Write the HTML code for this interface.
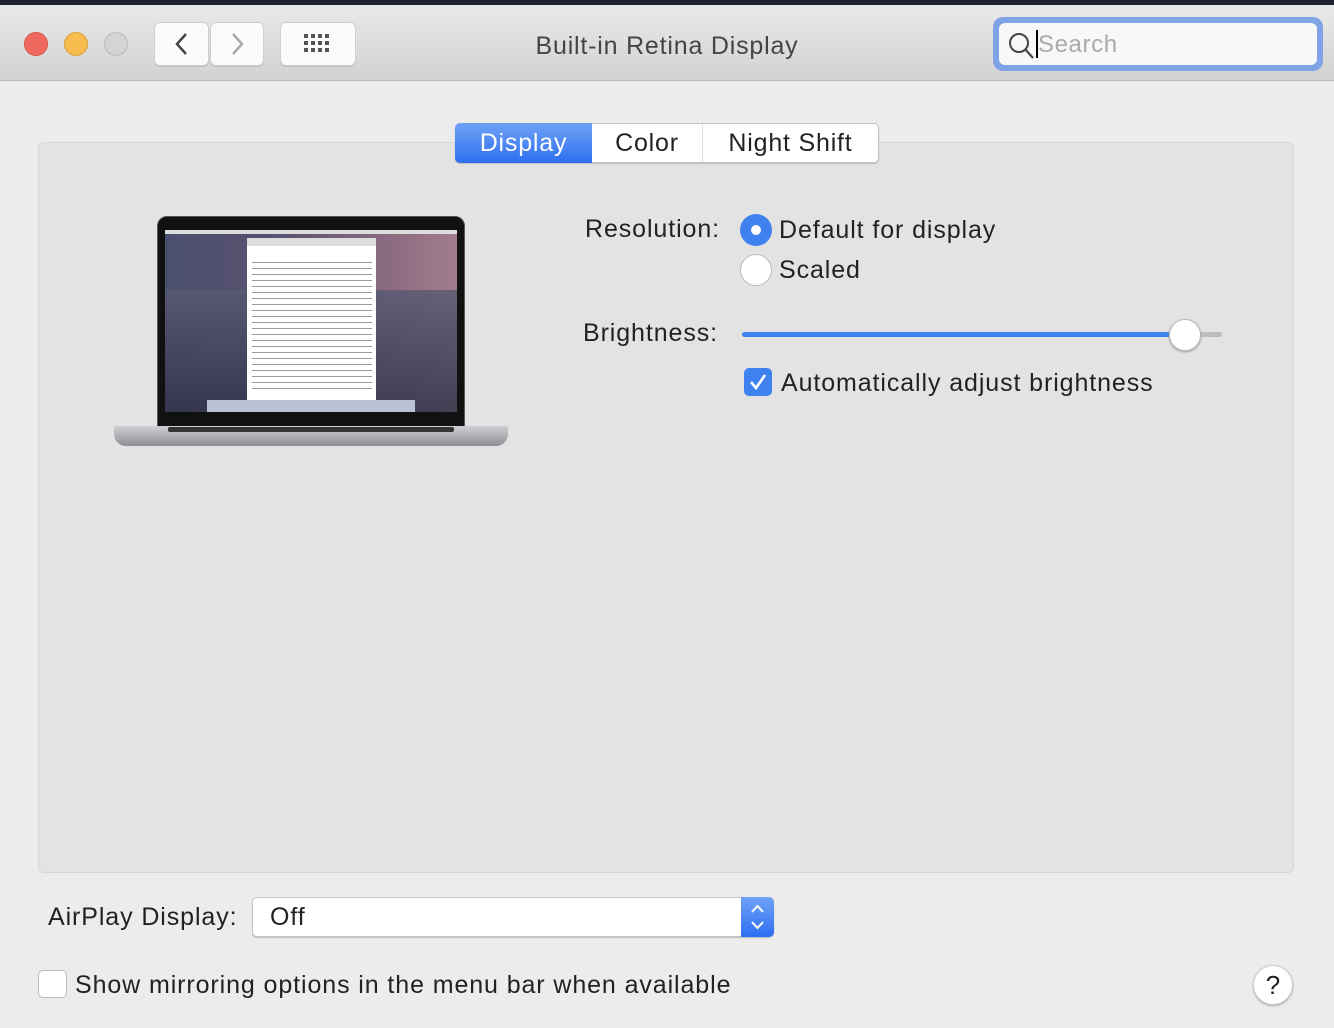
<!DOCTYPE html>
<html><head><meta charset="utf-8"><style>
*{box-sizing:border-box;margin:0;padding:0}
body{width:1334px;height:1028px;background:#ececec;font-family:"Liberation Sans",sans-serif;color:#222;position:relative;overflow:hidden}
.a{position:absolute}
.tb{left:0;top:0;width:1334px;height:81px;background:linear-gradient(#e9e9e9,#d2d2d2);border-top:5px solid #1f2230;border-bottom:1px solid #b8b8b8}
.dot{width:24px;height:24px;border-radius:50%;top:32px}
.btn{background:#fbfbfb;border:1px solid #cfcfcf;border-radius:6px;box-shadow:0 1px 0 #bdbdbd}
.lbl{font-size:25px;letter-spacing:.9px}
</style></head><body>
<div class="a" style="left:0;top:0;width:1334px;height:5px;background:#c8cde0"></div>
<div class="a tb"></div>
<div class="a dot" style="left:24px;background:#ee6a5f;border:1px solid #d65548"></div>
<div class="a dot" style="left:64px;background:#f6be4f;border:1px solid #dea33a"></div>
<div class="a dot" style="left:104px;background:#d4d4d4;border:1px solid #bcbcbc"></div>
<div class="a btn" style="left:154px;top:22px;width:55px;height:44px"></div>
<div class="a btn" style="left:210px;top:22px;width:54px;height:44px"></div>
<svg class="a" style="left:170px;top:30px" width="24" height="28"><path d="M16 4 L7 14 L16 24" stroke="#444" stroke-width="2.5" fill="none"/></svg>
<svg class="a" style="left:225px;top:30px" width="24" height="28"><path d="M8 4 L17 14 L8 24" stroke="#aaa" stroke-width="2.5" fill="none"/></svg>
<div class="a btn" style="left:280px;top:22px;width:76px;height:44px"></div>
<svg class="a" style="left:303px;top:34px" width="30" height="20" fill="#555">
<rect x="1" y="0" width="4" height="4"/><rect x="8" y="0" width="4" height="4"/><rect x="15" y="0" width="4" height="4"/><rect x="22" y="0" width="4" height="4"/>
<rect x="1" y="7" width="4" height="4"/><rect x="8" y="7" width="4" height="4"/><rect x="15" y="7" width="4" height="4"/><rect x="22" y="7" width="4" height="4"/>
<rect x="1" y="14" width="4" height="4"/><rect x="8" y="14" width="4" height="4"/><rect x="15" y="14" width="4" height="4"/><rect x="22" y="14" width="4" height="4"/></svg>
<div class="a" style="left:467px;top:32px;width:400px;text-align:center;font-size:25px;letter-spacing:.8px;color:#444">Built-in Retina Display</div>
<div class="a" style="left:993px;top:17px;width:330px;height:54px;border-radius:10px;background:#7fa3e4"></div>
<div class="a" style="left:999px;top:23px;width:318px;height:42px;border-radius:6px;background:#f8f8f8"></div>
<svg class="a" style="left:1007px;top:31px" width="30" height="30"><circle cx="12" cy="12" r="9" stroke="#444" stroke-width="2" fill="none"/><path d="M18 18 L26 27" stroke="#444" stroke-width="2.2"/></svg>
<div class="a" style="left:1036px;top:30px;width:2px;height:28px;background:#000"></div>
<div class="a" style="left:1038px;top:31px;font-size:24px;letter-spacing:.6px;color:#aaa">Search</div>

<div class="a" style="left:38px;top:142px;width:1256px;height:731px;background:#e3e3e3;border:1px solid #d6d6d6;border-radius:6px"></div>
<div class="a" style="left:455px;top:123px;width:424px;height:40px;background:#fff;border:1px solid #c4c4c4;border-radius:5px;box-shadow:0 1px 1px #bbb"></div>
<div class="a" style="left:455px;top:123px;width:137px;height:40px;background:linear-gradient(#6fa2f6,#2d6ff1);border-radius:5px 0 0 5px;color:#fff;font-size:25px;letter-spacing:.8px;text-align:center;line-height:40px">Display</div>
<div class="a" style="left:592px;top:124px;width:111px;height:38px;font-size:25px;letter-spacing:.8px;text-align:center;line-height:38px;border-right:1px solid #ddd">Color</div>
<div class="a" style="left:703px;top:124px;width:175px;height:38px;font-size:25px;letter-spacing:.8px;text-align:center;line-height:38px">Night Shift</div>

<!-- laptop -->
<div class="a" style="left:157px;top:216px;width:308px;height:212px;background:#111;border-radius:10px 10px 0 0;border:1px solid #555"></div>
<div class="a" style="left:165px;top:230px;width:292px;height:182px;background:linear-gradient(90deg,#4b4f6e 0%,#5a5270 40%,#8a6a80 75%,#a27c8c 100%)"></div>
<div class="a" style="left:165px;top:290px;width:292px;height:122px;background:linear-gradient(#585a72,#2e3046);opacity:.8"></div>
<div class="a" style="left:165px;top:230px;width:292px;height:4px;background:#ddd"></div>
<div class="a" style="left:247px;top:238px;width:129px;height:162px;background:#fff;border-top:8px solid #ddd"></div>
<div class="a" style="left:252px;top:260px;width:120px;height:134px;background:repeating-linear-gradient(#fff 0 2px,#999 2px 3px,#fff 3px 6px)"></div>
<div class="a" style="left:207px;top:400px;width:208px;height:12px;background:#b8c2d4"></div>
<div class="a" style="left:114px;top:426px;width:394px;height:20px;background:linear-gradient(#d0d0d4,#8e8e94);border-radius:2px 2px 12px 12px"></div>
<div class="a" style="left:168px;top:427px;width:286px;height:5px;background:#333;border-radius:2px"></div>

<div class="a lbl" style="left:585px;top:215px">Resolution:</div>
<div class="a" style="left:740px;top:214px;width:32px;height:32px;border-radius:50%;background:#3f82ef"></div>
<div class="a" style="left:751px;top:225px;width:10px;height:10px;border-radius:50%;background:#fff"></div>
<div class="a lbl" style="left:779px;top:216px">Default for display</div>
<div class="a" style="left:740px;top:254px;width:32px;height:32px;border-radius:50%;background:#fff;border:1px solid #bbb"></div>
<div class="a lbl" style="left:779px;top:256px">Scaled</div>
<div class="a lbl" style="left:583px;top:319px">Brightness:</div>
<div class="a" style="left:742px;top:332px;width:480px;height:5px;border-radius:3px;background:#bcbcbc"></div>
<div class="a" style="left:742px;top:332px;width:445px;height:5px;border-radius:3px;background:#3f82ef"></div>
<div class="a" style="left:1169px;top:319px;width:32px;height:32px;border-radius:50%;background:#fff;border:1px solid #bbb;box-shadow:0 1px 2px #999"></div>
<div class="a" style="left:744px;top:368px;width:28px;height:28px;border-radius:5px;background:#3f82ef"></div>
<svg class="a" style="left:744px;top:368px" width="28" height="28"><path d="M7 14 L12 20 L21 7" stroke="#fff" stroke-width="2.6" fill="none"/></svg>
<div class="a lbl" style="left:781px;top:369px">Automatically adjust brightness</div>

<div class="a lbl" style="left:48px;top:903px">AirPlay Display:</div>
<div class="a" style="left:252px;top:897px;width:522px;height:40px;background:#fff;border:1px solid #c4c4c4;border-radius:5px;box-shadow:0 1px 1px #bbb"></div>
<div class="a" style="left:741px;top:897px;width:33px;height:40px;background:linear-gradient(#6fa2f6,#2d6ff1);border-radius:0 5px 5px 0"></div>
<svg class="a" style="left:741px;top:897px" width="33" height="40"><path d="M11 15 L16.5 9 L22 15 M11 25 L16.5 31 L22 25" stroke="#fff" stroke-width="2" fill="none"/></svg>
<div class="a lbl" style="left:270px;top:903px">Off</div>
<div class="a" style="left:38px;top:970px;width:29px;height:28px;border-radius:5px;background:#fff;border:1px solid #bbb"></div>
<div class="a lbl" style="left:75px;top:971px">Show mirroring options in the menu bar when available</div>
<div class="a" style="left:1253px;top:965px;width:40px;height:40px;border-radius:50%;background:#fff;border:1px solid #ccc;box-shadow:0 1px 2px #aaa;text-align:center;line-height:38px;font-size:26px">?</div>
</body></html>
